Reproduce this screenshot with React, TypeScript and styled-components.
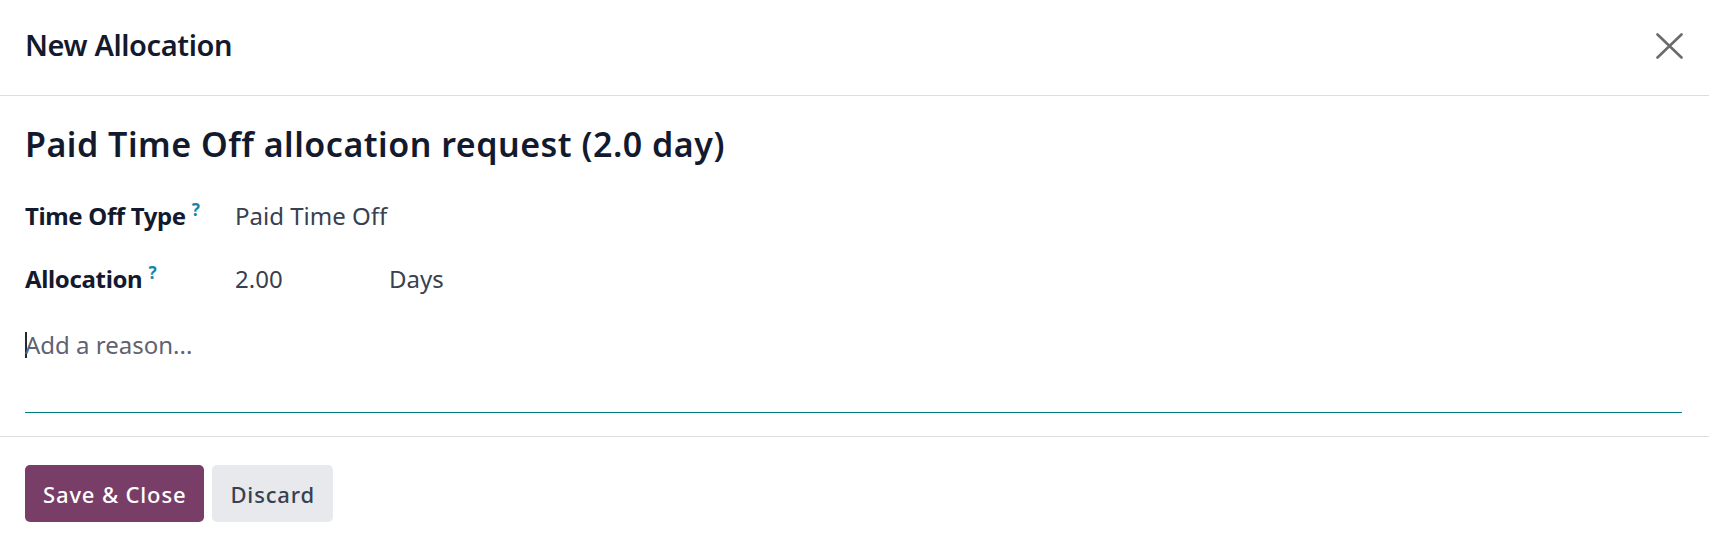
import React from "react";
import styled, { createGlobalStyle } from "styled-components";

const GlobalStyle = createGlobalStyle`
  html, body {
    margin: 0;
    padding: 0;
    background: #ffffff;
  }
  body {
    font-family: "Noto Sans", "Open Sans", sans-serif;
    color: #111827;
  }
  * {
    box-sizing: border-box;
  }
`;

type Field = {
  id: number;
  label: string;
  value: string;
  unit?: string;
};

const fields: Field[] = [
  { id: 1, label: "Time Off Type", value: "Paid Time Off" },
  { id: 2, label: "Allocation", value: "2.00", unit: "Days" },
];

const App: React.FC = () => {
  return (
    <>
      <GlobalStyle />
      <Dialog>
        <Header>
          <Title>New Allocation</Title>
          <CloseButton aria-label='Close'>
            <svg width='27' height='26' viewBox='0 0 27 26'>
              <path
                d='M1.5 1.5 L25.5 24.5 M25.5 1.5 L1.5 24.5'
                stroke='#6b6b6b'
                strokeWidth='2.6'
                strokeLinecap='round'
                fill='none'
              />
            </svg>
          </CloseButton>
        </Header>

        <Body>
          <Heading>Paid Time Off allocation request (2.0 day)</Heading>

          <FieldGrid>
            {fields.map((field) => (
              <React.Fragment key={field.id}>
                <Label>
                  {field.label}
                  <Help>?</Help>
                </Label>
                <ValueRow>
                  <Value $wide={!!field.unit}>{field.value}</Value>
                  {field.unit && <Value>{field.unit}</Value>}
                </ValueRow>
              </React.Fragment>
            ))}
          </FieldGrid>

          <Reason>
            <Caret />
            <Placeholder>Add a reason...</Placeholder>
          </Reason>
        </Body>

        <Footer>
          <Button $primary>Save &amp; Close</Button>
          <Button>Discard</Button>
        </Footer>
      </Dialog>
    </>
  );
};

const Dialog = styled.div`
  display: flex;
  flex-direction: column;
  width: 100%;
  min-height: 549px;
  background: #fff;
`;

const Header = styled.header`
  display: flex;
  align-items: center;
  justify-content: space-between;
  height: 96px;
  padding: 0 26px 4px 25px;
  border-bottom: 1px solid #dcdde0;
`;

const Title = styled.h4`
  margin: 0;
  font-size: 29px;
  font-weight: 600;
  line-height: 1.2;
  color: #141a2e;
  letter-spacing: -0.4px;
`;

const CloseButton = styled.button`
  display: flex;
  align-items: center;
  justify-content: center;
  padding: 0;
  border: 0;
  background: transparent;
  cursor: pointer;
`;

const Body = styled.main`
  display: flex;
  flex-direction: column;
  padding: 28px 27px 0 25px;
`;

const Heading = styled.h1`
  margin: 0;
  font-size: 34px;
  font-weight: 600;
  line-height: 40px;
  color: #141a2e;
  letter-spacing: 0.5px;
`;

const FieldGrid = styled.div`
  display: grid;
  grid-template-columns: 210px 1fr;
  grid-auto-rows: 36px;
  row-gap: 27px;
  margin-top: 33px;
  align-items: center;
`;

const Label = styled.div`
  font-size: 24px;
  font-weight: 700;
  color: #141a2e;
  letter-spacing: -0.35px;
  white-space: nowrap;
`;

const Help = styled.sup`
  margin-left: 6px;
  font-size: 17px;
  font-weight: 700;
  color: #1785a8;
  vertical-align: 9px;
  line-height: 0;
`;

const ValueRow = styled.div`
  display: flex;
  align-items: center;
`;

const Value = styled.span<{ $wide?: boolean }>`
  width: ${(p) => (p.$wide ? "154px" : "auto")};
  font-size: 24px;
  font-weight: 400;
  color: #374151;
  letter-spacing: 0;
`;

const Reason = styled.div`
  display: flex;
  align-items: center;
  height: 86px;
  padding-bottom: 50px;
  margin-top: 31px;
  border-bottom: 1px solid #017e84;
  cursor: text;
`;

const Caret = styled.span`
  display: inline-block;
  width: 1.5px;
  height: 26px;
  margin-right: -1.5px;
  background: #1f2937;
`;

const Placeholder = styled.span`
  font-size: 24px;
  line-height: 36px;
  color: #5f6272;
  letter-spacing: 0;
`;

const Footer = styled.footer`
  display: flex;
  gap: 8px;
  margin-top: 23px;
  padding: 28px 25px 27px;
  border-top: 1px solid #dcdde0;
`;

const Button = styled.button<{ $primary?: boolean }>`
  height: 57px;
  padding: 0 18px;
  border: 0;
  border-radius: 5px;
  font-family: "Noto Sans", "Open Sans", sans-serif;
  font-size: 22px;
  font-weight: 500;
  letter-spacing: 0.85px;
  color: ${(p) => (p.$primary ? "#ffffff" : "#374151")};
  background: ${(p) => (p.$primary ? "#793e67" : "#e7e9ed")};
  cursor: pointer;
`;

export default App;
